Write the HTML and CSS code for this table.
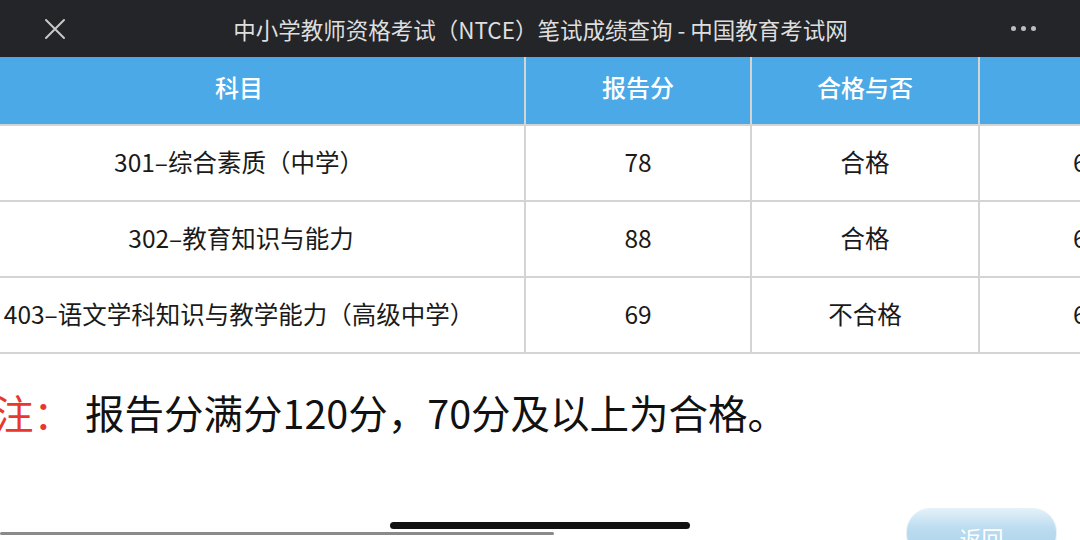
FILE: index.html
```html
<!DOCTYPE html>
<html lang="zh-CN">
<head>
<meta charset="utf-8">
<title>中小学教师资格考试（NTCE）笔试成绩查询 - 中国教育考试网</title>
<link rel="stylesheet" href="styles.css">
</head>
<body>
<div class="page">
  <header class="topbar">
    <span class="close" aria-label="关闭">
      <svg width="22" height="22" viewBox="0 0 22 22"><path d="M2 2 L20 20 M20 2 L2 20" stroke="#c9c9c9" stroke-width="2" stroke-linecap="round" fill="none"/></svg>
    </span>
    <h1 class="title">中小学教师资格考试（NTCE）笔试成绩查询 - 中国教育考试网</h1>
    <span class="more"><i></i><i></i><i></i></span>
  </header>

  <div class="table-wrap">
    <table class="scores">
      <colgroup>
        <col class="c1"><col class="c2"><col class="c3"><col class="c4">
      </colgroup>
      <thead>
        <tr><th>科目</th><th>报告分</th><th>合格与否</th><th></th></tr>
      </thead>
      <tbody>
        <tr><td class="subj s1">301–综合素质（中学）</td><td>78</td><td>合格</td><td class="last">6</td></tr>
        <tr><td class="subj s2">302–教育知识与能力</td><td>88</td><td>合格</td><td class="last">6</td></tr>
        <tr><td class="subj s3">403–语文学科知识与教学能力（高级中学）</td><td>69</td><td>不合格</td><td class="last">6</td></tr>
      </tbody>
    </table>
  </div>

  <p class="note"><span class="note-label">注：</span><span class="note-text">报告分满分120分，70分及以上为合格。</span></p>

  <div class="actions">
    <button class="back">返回</button>
  </div>

  <div class="hscroll"></div>
  <div class="home-indicator"></div>
</div>
</body>
</html>
```

FILE: styles.css
```css
html, body {
  margin: 0;
  padding: 0;
  background: #ffffff;
}
body {
  width: 1080px;
  height: 540px;
  overflow: hidden;
  font-family: "Noto Sans CJK SC", "Noto Sans", sans-serif;
  color: #1c1c1c;
}
.page {
  position: relative;
  width: 1080px;
  height: 540px;
  overflow: hidden;
}

/* top bar */
.topbar {
  height: 57px;
  background: #232528;
  display: flex;
  align-items: center;
  padding: 0 44px 0 44px;
  box-sizing: border-box;
}
.close {
  width: 22px;
  height: 22px;
  display: flex;
  flex: none;
}
.title {
  flex: 1;
  margin: 0;
  text-align: center;
  font-size: 22.5px;
  font-weight: 400;
  color: #dedede;
  padding-left: 4px;
  white-space: nowrap;
}
.more {
  display: flex;
  gap: 5px;
  flex: none;
}
.more i {
  width: 5px;
  height: 5px;
  border-radius: 50%;
  background: #bdbdbd;
  display: block;
}

/* table */
.table-wrap {
  overflow: hidden;
  width: 1080px;
}
.scores {
  margin-left: -46px;
  width: 1238px;
  table-layout: fixed;
  border-collapse: separate;
  border-spacing: 0;
}
.c1 { width: 572px; }
.c2 { width: 226px; }
.c3 { width: 228px; }
.c4 { width: 212px; }
.scores th,
.scores td {
  box-sizing: border-box;
  border-right: 2px solid #d4d4d4;
  border-bottom: 2px solid #d4d4d4;
  text-align: center;
  padding: 0;
  white-space: nowrap;
  overflow: hidden;
}
.scores th {
  height: 69px;
  background: #4ba9e7;
  color: #ffffff;
  font-size: 24px;
  font-weight: 500;
  padding-bottom: 8px;
}
.scores td {
  height: 76px;
  font-size: 24.5px;
  color: #1a1a1a;
  background: #ffffff;
  padding-bottom: 3px;
}
.scores td.s2 { padding-left: 4px; }
.scores td.last {
  text-align: left;
  padding-left: 93px;
}

/* note */
.note {
  margin: 34px 0 0 -6px;
  height: 48px;
  line-height: 48px;
  font-size: 39.5px;
  display: flex;
  gap: 12px;
  white-space: nowrap;
}
.note-label {
  color: #e8382e;
}
.note-text {
  color: #111111;
}

/* actions */
.actions {
  display: flex;
  justify-content: flex-end;
  padding-right: 23px;
  margin-top: 72px;
}
.back {
  width: 151px;
  height: 50px;
  border: 1px solid #e6f2fa;
  border-radius: 24px;
  background: linear-gradient(#e3f0f9 0%, #bcdcf0 40%, #a6cfe9 100%);
  color: #ffffff;
  font-family: "Noto Sans CJK SC", sans-serif;
  font-size: 22px;
  padding: 8px 0 0 0;
  line-height: 30px;
  display: block;
}

/* overlays */
.hscroll {
  position: absolute;
  left: 0;
  bottom: 5px;
  width: 554px;
  height: 3px;
  background: #8a8a8a;
  border-radius: 2px;
}
.home-indicator {
  position: absolute;
  left: 390px;
  top: 522px;
  width: 300px;
  height: 7px;
  border-radius: 4px;
  background: #111111;
}
```
